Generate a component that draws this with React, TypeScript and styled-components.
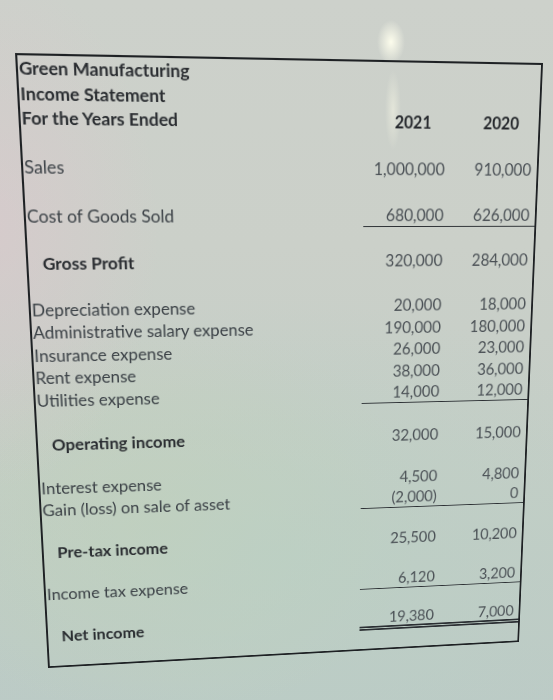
import React from "react";
import styled, { createGlobalStyle } from "styled-components";

const W = 528;
const H = 640;

// Photo perspective: map the flat sheet onto the quad seen in the picture.
function quadMatrix(
  p0: [number, number],
  p1: [number, number],
  p2: [number, number],
  p3: [number, number],
  w: number,
  h: number
): string {
  const [x0, y0] = p0;
  const [x1, y1] = p1;
  const [x2, y2] = p2;
  const [x3, y3] = p3;
  const dx1 = x1 - x2, dy1 = y1 - y2;
  const dx2 = x3 - x2, dy2 = y3 - y2;
  const dx3 = x0 - x1 + x2 - x3, dy3 = y0 - y1 + y2 - y3;
  const den = dx1 * dy2 - dx2 * dy1;
  const g = (dx3 * dy2 - dx2 * dy3) / den;
  const hh = (dx1 * dy3 - dx3 * dy1) / den;
  const a = x1 - x0 + g * x1;
  const b = x3 - x0 + hh * x3;
  const d = y1 - y0 + g * y1;
  const e = y3 - y0 + hh * y3;
  const v = [a / w, d / w, 0, g / w, b / h, e / h, 0, hh / h, 0, 0, 1, 0, x0, y0, 0, 1];
  return `matrix3d(${v.map((n) => n.toFixed(8)).join(",")})`;
}

const SHEET_TRANSFORM = quadMatrix([15, 53], [543, 63], [519, 642], [48, 668], W, H);

const GlobalStyle = createGlobalStyle`
  html, body { margin: 0; padding: 0; }
  body {
    width: 553px;
    height: 700px;
    overflow: hidden;
    background: #c8cec7;
  }
`;

const Screen = styled.div`
  width: 553px;
  height: 700px;
  overflow: hidden;
  background:
    radial-gradient(ellipse 14px 22px at 391px 42px, rgba(255, 255, 238, 0.95), rgba(255, 255, 238, 0) 100%),
    radial-gradient(ellipse 8px 40px at 393px 110px, rgba(255, 255, 235, 0.45), rgba(255, 255, 235, 0) 100%),
    radial-gradient(ellipse 170px 260px at -10px 230px, rgba(226, 196, 206, 0.45), rgba(226, 196, 206, 0) 100%),
    radial-gradient(ellipse 420px 260px at 280px 560px, rgba(186, 208, 196, 0.7), rgba(186, 208, 196, 0) 100%),
    radial-gradient(ellipse 260px 200px at 160px 520px, rgba(198, 210, 180, 0.6), rgba(198, 210, 180, 0) 100%),
    linear-gradient(180deg, #cdd1cb 0%, #cbd0c9 35%, #c3cdc6 70%, #bccac6 100%);
  font-family: Lato, "Open Sans", "Liberation Sans", sans-serif;
`;

const Sheet = styled.div`
  box-sizing: border-box;
  width: ${W}px;
  height: ${H}px;
  border: 2px solid #1e2124;
  transform-origin: 0 0;
  transform: ${SHEET_TRANSFORM};
  display: grid;
  grid-template-rows: repeat(27, 1fr);
  filter: blur(0.35px);
`;

const Row = styled.div`
  display: grid;
  grid-template-columns: 340px 91px 1fr;
  min-height: 0;
`;

const Label = styled.div<{ $bold?: boolean; $indent?: boolean }>`
  display: flex;
  align-items: center;
  padding-left: ${(p) => (p.$indent ? "14px" : "1px")};
  font-size: 17.2px;
  font-weight: ${(p) => (p.$bold ? 700 : 400)};
  color: ${(p) => (p.$bold ? "#2a2d31" : "#3b4146")};
  white-space: nowrap;
`;

const Num = styled.div<{ $line?: "single" | "double"; $head?: boolean }>`
  box-sizing: border-box;
  display: flex;
  align-items: center;
  justify-content: flex-end;
  padding-right: ${(p) => (p.$head ? "21px" : "6px")};
  font-size: 16.5px;
  font-weight: ${(p) => (p.$head ? 700 : 400)};
  color: ${(p) => (p.$head ? "#25282c" : "#4a5055")};
  white-space: nowrap;
  border-bottom: ${(p) =>
    p.$line === "double"
      ? "5px double #2b2f33"
      : p.$line === "single"
      ? "1.5px solid #2b2f33"
      : "0"};
`;

type Line = {
  label?: string;
  bold?: boolean;
  indent?: boolean;
  a?: string;
  b?: string;
  head?: boolean;
  line?: "single" | "double";
};

const rows: Line[] = [
  { label: "Green Manufacturing", bold: true },
  { label: "Income Statement", bold: true },
  { label: "For the Years Ended", bold: true, a: "2021", b: "2020", head: true },
  {},
  { label: "Sales", a: "1,000,000", b: "910,000" },
  {},
  { label: "Cost of Goods Sold", a: "680,000", b: "626,000", line: "single" },
  {},
  { label: "Gross Profit", bold: true, indent: true, a: "320,000", b: "284,000" },
  {},
  { label: "Depreciation expense", a: "20,000", b: "18,000" },
  { label: "Administrative salary expense", a: "190,000", b: "180,000" },
  { label: "Insurance expense", a: "26,000", b: "23,000" },
  { label: "Rent expense", a: "38,000", b: "36,000" },
  { label: "Utilities expense", a: "14,000", b: "12,000", line: "single" },
  {},
  { label: "Operating income", bold: true, indent: true, a: "32,000", b: "15,000" },
  {},
  { label: "Interest expense", a: "4,500", b: "4,800" },
  { label: "Gain (loss) on sale of asset", a: "(2,000)", b: "0", line: "single" },
  {},
  { label: "Pre-tax income", bold: true, indent: true, a: "25,500", b: "10,200" },
  {},
  { label: "Income tax expense", a: "6,120", b: "3,200", line: "single" },
  {},
  { label: "Net income", bold: true, indent: true, a: "19,380", b: "7,000", line: "double" },
  {},
];

export default function App() {
  return (
    <>
      <GlobalStyle />
      <Screen>
        <Sheet>
          {rows.map((r, i) => (
            <Row key={i}>
              <Label $bold={r.bold} $indent={r.indent}>
                {r.label ?? ""}
              </Label>
              <Num $line={r.line} $head={r.head}>
                {r.a ?? ""}
              </Num>
              <Num $line={r.line} $head={r.head}>
                {r.b ?? ""}
              </Num>
            </Row>
          ))}
        </Sheet>
      </Screen>
    </>
  );
}
